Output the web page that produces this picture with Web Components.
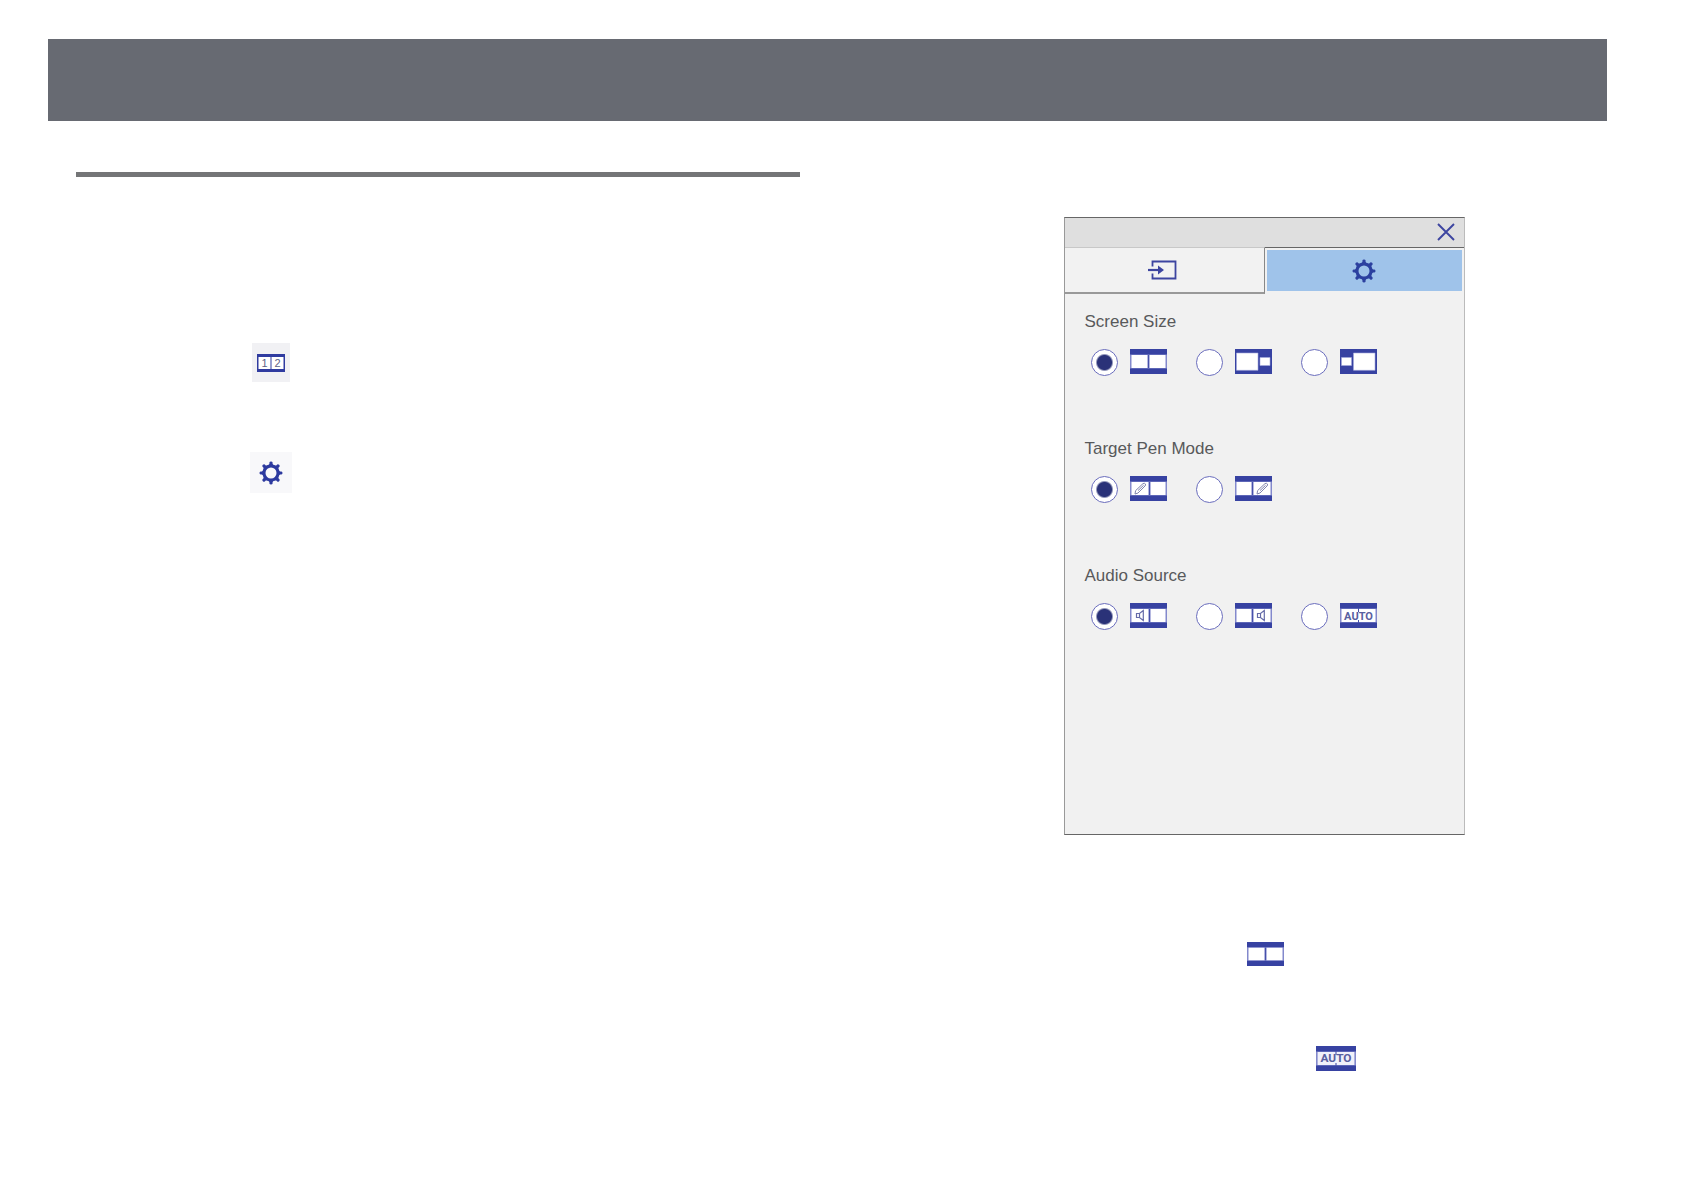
<!DOCTYPE html>
<html lang="en">
<head>
<meta charset="utf-8">
<title>Split Screen Settings</title>
<style>
  body { margin: 0; background: #fff; color: #58595b; font-family: "Liberation Sans", Arial, sans-serif; font-size: 17px; line-height: 20px; }
</style>
</head>
<body>
<manual-page>
  <page-band slot="band"></page-band>
  <margin-steps slot="steps"></margin-steps>
  <settings-dialog slot="figure"></settings-dialog>
  <choice-notes slot="notes"></choice-notes>
</manual-page>

<script>
const define = (name, html, setup) => {
  const template = document.createElement('template');
  template.innerHTML = html;
  customElements.define(name, class extends HTMLElement {
    constructor() {
      super();
      this.attachShadow({ mode: 'open' }).append(template.content.cloneNode(true));
    }
    connectedCallback() { if (setup) setup(this, this.shadowRoot); }
  });
};

const pen = x => `<path transform="translate(${x} 0)" d="M1 18 1.600 14.600 9 7.600Q10.500 6.700 11.300 7.900 12 9 11 10L4 17ZM4 14.600 9.600 9.300" fill="none" stroke="#8084ad" stroke-width="1"/>`;
const speaker = x => `<path transform="translate(${x} 0)" d="M.5 10.500H3.500L7.300 7.500V17.500L3.500 14.500H.5ZM3.500 10.500V14.500" fill="none" stroke="#656ba8" stroke-width="1.200"/>`;
const film = (inner, divider = 18.5) => `<path fill="#3742a2" d="M0 0H37V25H0Z"/><path fill="#8389cc" d="M0 5.500H37V19.500H0Z"/><path fill="#fff" d="M1.500 6H${divider - 1}V19H1.500ZM${divider + 1} 6H35.500V19H${divider + 1}Z"/><path stroke="#4650aa" stroke-width="1.200" d="M${divider} 6V19"/>${inner}`;
const autoFilm = back => `<path fill="#3742a2" d="M0 0H37V25H0Z"/><path fill="#8389cc" d="M0 5.500H37V19.500H0Z"/><path fill="${back}" d="M1.500 6H35.500V19H1.500Z"/><path stroke="#4650aa" d="M18.500 5V9M18.500 17V20"/><text x="18.500" y="16.500" text-anchor="middle" font-family="Roboto, sans-serif" font-weight="700" font-size="11" fill="#5960a0">AUTO</text>`;

const icons = {
  both: [37, 25, film('')],
  largeLeft: [37, 25, `<path fill="#3742a2" d="M0 0H37V25H0Z"/><path fill="#fff" stroke="#a5aadb" stroke-width=".6" d="M1.500 4H23V21.300H1.500ZM25 8.500H35V16.500H25Z"/>`],
  largeRight: [37, 25, `<path fill="#3742a2" d="M0 0H37V25H0Z"/><path fill="#fff" stroke="#a5aadb" stroke-width=".6" d="M13.500 4H35V21.300H13.500ZM1.500 8.500H11.500V16.500H1.500Z"/>`],
  penLeft: [37, 25, film(pen(4), 19.5)],
  penRight: [37, 25, film(pen(21), 17.5)],
  soundLeft: [37, 25, film(speaker(6), 19.5)],
  soundRight: [37, 25, film(speaker(22), 17.5)],
  auto: [37, 25, autoFilm('#fff')],
  autoNote: [37, 25, autoFilm('#f1f1fa')],
  split: [28, 18, `<path fill="#303ca0" d="M0 0H28V18H0Z"/><path fill="#fff" d="M1.500 3H13.500V15H1.500ZM14.500 3H26.500V15H14.500Z"/><g fill="#5f6487" font-family="Liberation Sans, sans-serif" font-size="11" text-anchor="middle"><text x="7.500" y="13">1</text><text x="20.500" y="13">2</text></g>`],
  gear: [24, 24, `<circle cx="12" cy="12" r="7" fill="none" stroke="currentColor" stroke-width="3"/><g fill="currentColor">${[0, 45, 90, 135, 180, 225, 270, 315].map(a => `<path transform="rotate(${a} 12 12)" d="M8 5.500 10.400 3V1.600Q10.600.5 12 .5 13.400.5 13.600 1.600V3L16 5.500Z"/>`).join('')}</g>`],
  input: [30, 20, `<path d="M5.500 6.500V1.500H28.500V18.500H5.500V13.500" fill="none" stroke="currentColor" stroke-width="1.800"/><path d="M1 10H12" stroke="currentColor" stroke-width="2.200"/><path d="M11 5.500 17 10 11 14.500Z" fill="currentColor"/>`],
  close: [18, 18, `<path d="M1 1 17 17M17 1 1 17" stroke="currentColor" stroke-width="1.900" fill="none"/>`]
};

define('ui-icon', `<style>:host{display:block;flex:none}svg{display:block}</style>`, (host, root) => {
  if (root.querySelector('svg')) return;
  const [w, h, art] = icons[host.getAttribute('name')];
  const width = +(host.getAttribute('width') || w);
  root.innerHTML += `<svg width="${width}" height="${host.getAttribute('height') || h}" viewBox="0 0 ${w} ${h}" preserveAspectRatio="none" aria-hidden="true">${art}</svg>`;
});

define('page-band', `<style>:host{display:block;height:82px;background:#676a72}</style>`);

define('margin-steps', `
<style>
  :host { display: block; border-top: 5px solid #747577; }
  .steps { display: flex; flex-direction: column; align-items: flex-start; gap: 70px; padding: 166px 0 0 174px; }
  .tile { display: grid; place-items: center; width: 42px; height: 41px; color: #2d3a9f; background: #f8f8fa; }
  .split { width: 38px; height: 39px; background: #f1f1f4; margin-inline: 2px; }
</style>
<div class="steps">
  <span class="tile split"><ui-icon name="split"></ui-icon></span>
  <span class="tile"><ui-icon name="gear"></ui-icon></span>
</div>`);

define('option-group', `
<style>
  :host { display: block; }
  h2 { margin: 0; font-size: 17px; line-height: 20px; font-weight: 400; color: #58595b; }
  .row { display: flex; gap: 29px; padding: 17px 0 0 6px; }
  label { display: flex; align-items: flex-start; gap: 12px; }
  input { appearance: none; margin: 0; width: 27px; height: 27px; border: 1px solid #6a6dbd; border-radius: 50%; background: #fff; }
  input:checked { background: radial-gradient(circle, #2a3278 0 7px, #fff 9px); }
</style>
<h2 id="title"></h2>
<div class="row" role="radiogroup" aria-labelledby="title"></div>`, (host, root) => {
  root.querySelector('h2').textContent = host.getAttribute('heading');
  root.querySelector('.row').innerHTML = host.getAttribute('options').split(' ').map((name, i) =>
    `<label><input type="radio" name="choice" value="${name}" aria-label="${name}"${i ? '' : ' checked'}><ui-icon name="${name}"></ui-icon></label>`).join('');
});

define('settings-dialog', `
<style>
  :host { display: flex; flex-direction: column; box-sizing: border-box; width: 401px; min-height: 618px; background: #f1f1f1; border: 1px solid #666; border-left-color: #999; border-right-color: #bbb; }
  header { display: flex; justify-content: flex-end; align-items: center; box-sizing: border-box; height: 29px; padding: 0 9px 1px 0; background: #dfdfdf; }
  button { display: grid; place-items: center; margin: 0; padding: 0; border: 0; background: none; color: #3d45a0; }
  nav { display: flex; height: 47px; }
  nav > button { flex: 1; box-sizing: border-box; border-top: 1px solid #c8c8c8; border-right: 1px solid #888; border-bottom: 2px solid #999; background: #f2f2f2; padding-right: 4px; }
  nav > .active { border: 0; border-top: 1px solid #666; padding: 2px 2px 3px 2px; background: #9fc3ea content-box; color: #2c409f; }
  .body { display: flex; flex-direction: column; gap: 63px; padding: 18px 20px; }
</style>
<header><button aria-label="Close"><ui-icon name="close"></ui-icon></button></header>
<nav role="tablist">
  <button role="tab" aria-label="Input"><ui-icon name="input"></ui-icon></button>
  <button role="tab" class="active" aria-selected="true" aria-label="Settings"><ui-icon name="gear"></ui-icon></button>
</nav>
<div class="body">
  <option-group heading="Screen Size" options="both largeLeft largeRight"></option-group>
  <option-group heading="Target Pen Mode" options="penLeft penRight"></option-group>
  <option-group heading="Audio Source" options="soundLeft soundRight auto"></option-group>
</div>`);

define('choice-notes', `
<style>
  :host { display: flex; flex-direction: column; align-items: flex-start; gap: 80px; padding: 107px 0 0 345px; }
  .auto { padding-left: 69px; }
</style>
<ui-icon name="both" height="24"></ui-icon>
<ui-icon class="auto" name="autoNote" width="40"></ui-icon>`);

define('manual-page', `
<style>
  :host { display: block; box-sizing: border-box; min-height: 100vh; padding: 39px 0; }
  .band { padding: 0 77px 0 48px; }
  main { display: grid; grid-template-columns: 1fr 1fr; gap: 102px; padding: 51px 58px 0 76px; }
  .right { padding-top: 45px; }
  .figure { display: flex; justify-content: center; }
</style>
<div class="band"><slot name="band"></slot></div>
<main>
  <div><slot name="steps"></slot></div>
  <div class="right">
    <div class="figure"><slot name="figure"></slot></div>
    <slot name="notes"></slot>
  </div>
</main>`);
</script>
</body>
</html>
